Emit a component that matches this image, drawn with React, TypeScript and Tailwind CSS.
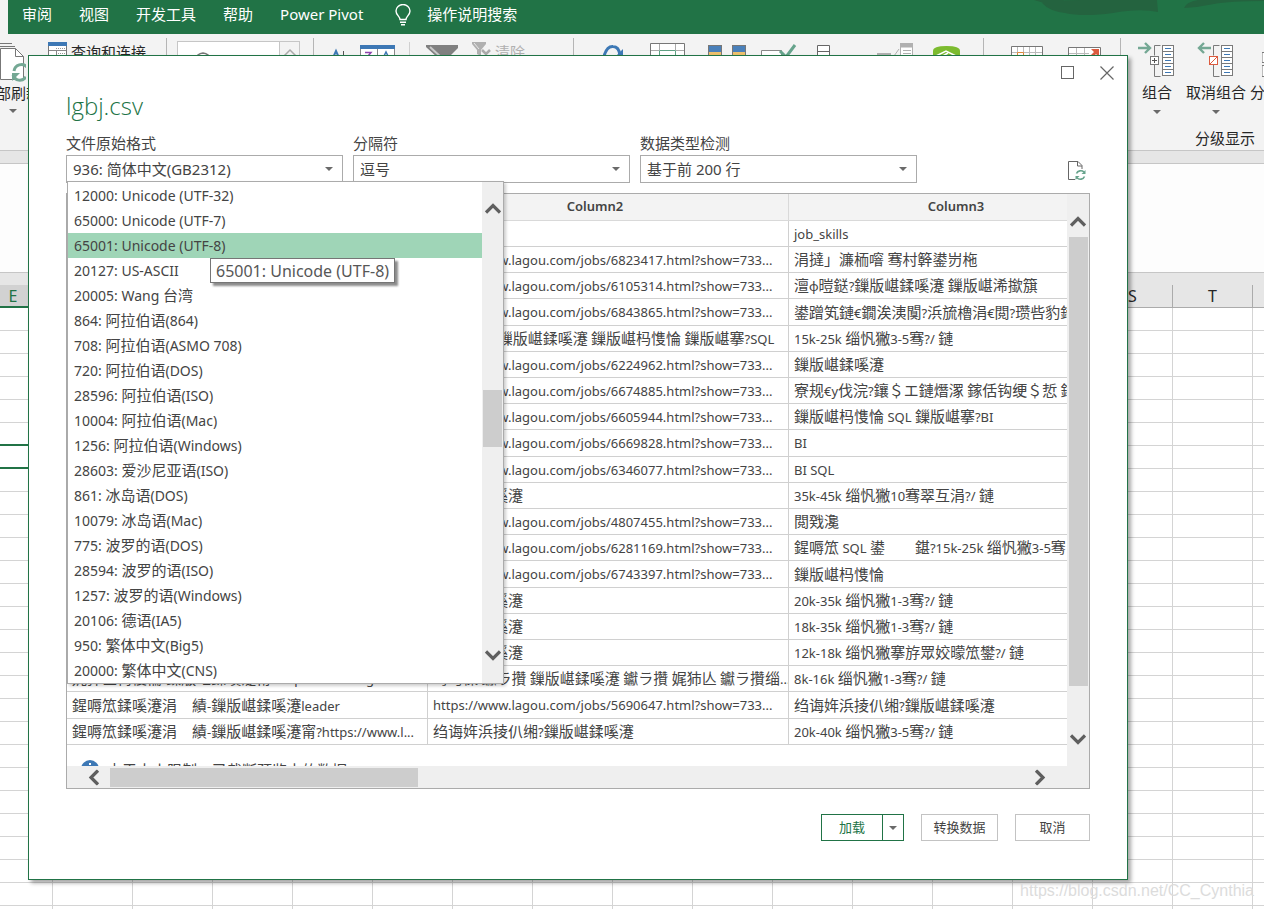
import React, { useState } from 'react'

const ui = "font-['Noto_Sans','Noto_Sans_CJK_SC',sans-serif]"

const tabs = ['审阅', '视图', '开发工具', '帮助', 'Power Pivot']

const encodings = [
  '12000: Unicode (UTF-32)',
  '65000: Unicode (UTF-7)',
  '65001: Unicode (UTF-8)',
  '20127: US-ASCII',
  '20005: Wang 台湾',
  '864: 阿拉伯语(864)',
  '708: 阿拉伯语(ASMO 708)',
  '720: 阿拉伯语(DOS)',
  '28596: 阿拉伯语(ISO)',
  '10004: 阿拉伯语(Mac)',
  '1256: 阿拉伯语(Windows)',
  '28603: 爱沙尼亚语(ISO)',
  '861: 冰岛语(DOS)',
  '10079: 冰岛语(Mac)',
  '775: 波罗的语(DOS)',
  '28594: 波罗的语(ISO)',
  '1257: 波罗的语(Windows)',
  '20106: 德语(IA5)',
  '950: 繁体中文(Big5)',
  '20000: 繁体中文(CNS)',
]

const jobUrl = (id: number) => `https://www.lagou.com/jobs/${id}.html?show=733...`

const rows = [
  ['job_name', '', 'job_skills'],
  ['鏁版嵁鍒嗘瀽甯?', jobUrl(6823417), '涓撻」濂栭噾 骞村簳鍙岃柂'],
  ['鏁版嵁鍒嗘瀽甯?', jobUrl(6105314), '澶ф暟鎹?鏁版嵁鍒嗘瀽 鏁版嵁浠撳簱'],
  ['鏁版嵁鍒嗘瀽甯?', jobUrl(6843865), '鍙蹭笂鏈€鐗涘洟闃?浜旈櫓涓€閲?瓒呰豹鍗'],
  ['鏁版嵁鍒嗘瀽甯?', 'BI 鐢靛晢 鏁版嵁鍒嗘瀽 鏁版嵁杩愯惀 鏁版嵁搴?SQL', '15k-25k 缁忛獙3-5骞?/ 鏈'],
  ['鏁版嵁鍒嗘瀽甯?', jobUrl(6224962), '鏁版嵁鍒嗘瀽'],
  ['鏁版嵁鍒嗘瀽甯?', jobUrl(6674885), '寮规€у伐浣?鑲＄エ鏈熸潈 鎵佸钩绠＄悊 鍏'],
  ['鏁版嵁鍒嗘瀽甯?', jobUrl(6605944), '鏁版嵁杩愯惀 SQL 鏁版嵁搴?BI'],
  ['鏁版嵁鍒嗘瀽甯?', jobUrl(6669828), 'BI'],
  ['鏁版嵁鍒嗘瀽甯?', jobUrl(6346077), 'BI SQL'],
  ['鏁版嵁鍒嗘瀽甯?', '鏁版嵁鍒嗘瀽', '35k-45k 缁忛獙10骞翠互涓?/ 鏈'],
  ['鏁版嵁鍒嗘瀽甯?', jobUrl(4807455), '閲戣瀺'],
  ['鏁版嵁鍒嗘瀽甯?', jobUrl(6281169), '鍟嗕笟 SQL 鍙　　鍖?15k-25k 缁忛獙3-5骞'],
  ['鏁版嵁鍒嗘瀽甯?', jobUrl(6743397), '鏁版嵁杩愯惀'],
  ['鏁版嵁鍒嗘瀽甯?', '鏁版嵁鍒嗘瀽', '20k-35k 缁忛獙1-3骞?/ 鏈'],
  ['鏁版嵁鍒嗘瀽甯?', '鏁版嵁鍒嗘瀽', '18k-35k 缁忛獙1-3骞?/ 鏈'],
  ['鏁版嵁鍒嗘瀽甯?', '鏁版嵁鍒嗘瀽', '12k-18k 缁忛獙搴斿眾姣曚笟鐢?/ 鏈'],
  ['娓犻亾杩愯惀-鏁版嵁鍒嗘瀽甯?https://www.lago...', '骞垮憡 钀ラ攢 鏁版嵁鍒嗘瀽 钀ラ攢 娓犻亾 钀ラ攢缁...', '8k-16k 缁忛獙1-3骞?/ 鏈'],
  ['鍟嗕笟鍒嗘瀽涓　績-鏁版嵁鍒嗘瀽leader', jobUrl(5690647), '绉诲姩浜掕仈缃?鏁版嵁鍒嗘瀽'],
  ['鍟嗕笟鍒嗘瀽涓　績-鏁版嵁鍒嗘瀽甯?https://www.l...', '绉诲姩浜掕仈缃?鏁版嵁鍒嗘瀽', '20k-40k 缁忛獙3-5骞?/ 鏈'],
]

const sheetColumns = 'EFGHIJKLMNOPQRSTU'.split('')

// CJK runs are set one step larger than the latin text around them
function Mixed({ text }: { text: string }) {
  return (
    <>
      {text.split(/([\u3000-\uffef]+)/).map((part, i) =>
        i % 2 ? <span key={i} className="text-[15px]">{part}</span> : part
      )}
    </>
  )
}

function Caret() {
  return (
    <svg width="8" height="4" viewBox="0 0 8 4" className="pointer-events-none">
      <path d="M0 0h8L4 4z" fill="#6a6a6a" />
    </svg>
  )
}

function ScrollArrow({ className }: { className: string }) {
  return (
    <svg width="16" height="11" viewBox="0 0 16 11" className={className}>
      <path d="M1 9.5L8 2.5l7 7" fill="none" stroke="#5f5f5f" strokeWidth="3.2" />
    </svg>
  )
}

function RibbonDivider({ className }: { className: string }) {
  return <div className={`w-px h-24 -mt-1 bg-[#b5b5b5] shrink-0 ${className}`} />
}

function OutlineIcon({ ungroup = false }: { ungroup?: boolean }) {
  return (
    <svg width="38" height="36" viewBox="0 0 38 36" fill="none">
      {ungroup ? (
        <path d="M14 6H2M7 1L2 6l5 5" stroke="#74a894" strokeWidth="2.4" />
      ) : (
        <path d="M0 6h12M7 1l5 5-5 5" stroke="#74a894" strokeWidth="2.4" />
      )}
      <path d="M22.500 3.500h-6v10M16.500 23v11.500h6" stroke="#7a7a7a" />
      {ungroup ? (
        <>
          <rect x="12.500" y="14.500" width="8" height="8" fill="#fff" stroke="#dc5b3f" />
          <path d="M13 22l7-7" stroke="#dc5b3f" />
        </>
      ) : (
        <>
          <rect x="12.500" y="14.500" width="8" height="8" fill="#fff" stroke="#7a7a7a" />
          <path d="M14 18.500h5M16.500 16v5" stroke="#555" />
        </>
      )}
      <rect x="24.500" y="3.500" width="11" height="30" fill="#fff" stroke="#7a7a7a" />
      <path d="M24 9.500h12M24 15.500h12M24 21.500h12M24 27.500h12" stroke="#7a7a7a" />
      <path d="M27 6.500h6M27 12.500h6M27 18.500h6M27 24.500h6M27 30.500h6" stroke="#3d78b5" />
    </svg>
  )
}

function TitleBar() {
  return (
    <header className="relative flex items-start h-[34px] ml-2 pl-[14px] bg-[#217346] text-white text-[15px] leading-7">
      <svg width="230" height="34" viewBox="0 0 230 34" className="absolute right-0 top-0">
        <path d="M0 0h30q-8 4-20 3zM8 3q4-3 40-3h75l1 12q-18-4-45 1-30 4-48 0-16-2-23-10z" fill="#24633f" />
        <path d="M150 8q2-6 14-8h66v1q-34 0-50 3-14 3-30 4z" fill="#24633f" />
      </svg>
      <nav className="flex gap-[27px]">
        {tabs.map((tab) => (
          <button key={tab}>{tab}</button>
        ))}
      </nav>
      <svg width="16" height="22" viewBox="0 0 16 22" fill="none" stroke="#fff" strokeWidth="1.400" className="ml-8 mt-1">
        <path d="M5 15.500c0-3-4-4.500-4-8.500a7 6.500 0 0 1 14 0c0 4-4 5.500-4 8.500z" />
        <path d="M5 18.300h6M6 20.800h4" />
      </svg>
      <button className="ml-4 leading-7">操作说明搜索</button>
    </header>
  )
}

function Ribbon() {
  return (
    <div className="flex items-start h-[117px] pt-2 bg-[#f3f3f3] border-b border-[#c6c6c6] text-[15px] text-[#262626] overflow-hidden">
      <div className="flex flex-col items-center w-[22px] shrink-0">
        <svg width="30" height="42" viewBox="0 0 30 42" fill="none" className="mt-px shrink-0">
          <path d="M0 .5h16M0 3.500h19" stroke="#777" />
          <path d="M4.500 36.500V5.500h15l8 8v23z" fill="#fff" stroke="#777" />
          <path d="M19.500 5.500v8h8" stroke="#777" />
          <path d="M18 28a7.500 7.500 0 0 1 13-4M17 32c2 6 9 7 13 2" stroke="#74a894" strokeWidth="3" />
          <path d="M16 30h8l-8 8z" fill="#74a894" />
        </svg>
        <span className="whitespace-nowrap leading-4">全部刷新</span>
        <span className="mt-2 ml-1"><Caret /></span>
      </div>
      <svg width="19" height="16" viewBox="0 0 19 16" className="ml-[26px] shrink-0">
        <path d="M.5 1v15M18.500 1v15" stroke="#777" />
        <path fill="#fff" d="M1 4h17v12H1z" />
        <path fill="#3d78b5" d="M0 0h19v4H0z" />
        <path d="M8 6.500h9M10 11.500h7" stroke="#999" strokeDasharray="1 1" />
        <path d="M1 8.500h17M8.500 9v7" stroke="#888" />
      </svg>
      <span className="ml-1 leading-5 whitespace-nowrap">查询和连接</span>
      <RibbonDivider className="ml-5" />
      <div className="flex w-[123px] h-16 ml-2.5 -mt-px border border-[#c6c6c6] bg-white shrink-0">
        <svg width="101" height="16" viewBox="0 0 101 16" fill="none">
          <path d="M18 16q1-4 7-5 6 1 7 5" stroke="#777" strokeWidth="1.500" />
        </svg>
        <div className="w-5 border-l border-[#c6c6c6] bg-[#f3f3f3]">
          <svg width="20" height="16" viewBox="0 0 20 16" fill="none">
            <path d="M4 14l6-6 6 6" stroke="#aaa" strokeWidth="1.500" />
          </svg>
        </div>
      </div>
      <RibbonDivider className="ml-[13px]" />
      <svg width="14" height="16" viewBox="0 0 14 16" fill="none" className="ml-[18px] shrink-0">
        <path d="M0 18L4 9l4 9" stroke="#3d78b5" strokeWidth="2" />
        <path d="M11.500 9v7" stroke="#555" />
      </svg>
      <svg width="35" height="16" viewBox="0 0 35 16" fill="none" className="ml-[14px] shrink-0">
        <path d="M1 7h33v9H1z" fill="#fff" />
        <path d="M.5 3v13M34.500 3v13M17.500 6v10" stroke="#888" />
        <path fill="#3d78b5" d="M0 3h35v4H0z" />
        <path d="M5 10.500h6l-5 6" stroke="#8e44ad" strokeWidth="1.500" />
        <path d="M23 16l3-6 3 6" stroke="#3d78b5" strokeWidth="1.500" />
      </svg>
      <div className="w-px h-16 ml-[14px] bg-[#d0d0d0] shrink-0" />
      <svg width="32" height="16" viewBox="0 0 32 16" className="ml-4 shrink-0">
        <path d="M0 3h32v3L22 16H12L0 5z" fill="#808080" />
        <path d="M4 5l12 11" stroke="#c9c9c9" strokeWidth="2" />
      </svg>
      <svg width="19" height="16" viewBox="0 0 19 16" fill="none" className="ml-[14px] shrink-0">
        <path d="M0 0h14v2L9 8v6l-4-2V8L0 2z" fill="#b0b0b0" />
        <path d="M2 1l5 6" stroke="#e8e8e8" />
        <path d="M10 8l4 4 4-4" stroke="#aaa" strokeWidth="2.500" />
      </svg>
      <span className="ml-1 leading-5 text-[#b0b0b0] whitespace-nowrap">清除</span>
      <RibbonDivider className="ml-12" />
      <svg width="20" height="16" viewBox="0 0 20 16" fill="none" className="ml-[29px] shrink-0">
        <path d="M1 14Q4 4 10 4.500q6 0 7 9" stroke="#3d78b5" strokeWidth="3" />
        <path d="M20 7v8h-8z" fill="#3d78b5" />
      </svg>
      <svg width="35" height="16" viewBox="0 0 35 16" fill="none" className="ml-[27px] shrink-0">
        <path d="M.5 20V1.500h34V20" fill="#fff" stroke="#777" />
        <path d="M9.500 2v6M25.500 2v6M1 8.500h8M26 8.500h8" stroke="#aaa" />
        <path d="M9.500 16V8.500h16V16" stroke="#5fa083" />
      </svg>
      <svg width="38" height="16" viewBox="0 0 38 16" className="ml-[23px] shrink-0">
        <path d="M0 3h14v13H0zM24 3h14v13H24z" fill="#777" />
        <path d="M1 4h12v6H1zM25 4h12v6H25z" fill="#4a80ba" />
        <path d="M1 10h12v6H1zM25 10h12v6H25z" fill="#edc06c" />
      </svg>
      <svg width="36" height="16" viewBox="0 0 36 16" fill="none" className="ml-[15px] shrink-0">
        <path d="M.5 16V8.500h20V16" fill="#fff" stroke="#888" />
        <path d="M19 9l6 6 9-12" stroke="#66a38c" strokeWidth="3" />
      </svg>
      <svg width="13" height="16" viewBox="0 0 13 16" className="ml-5 shrink-0">
        <path d="M.5 16V3.500h12V16M0 9.500h13" fill="#fff" stroke="#666" />
      </svg>
      <svg width="36" height="16" viewBox="0 0 36 16" fill="none" className="ml-[47px] shrink-0">
        <path d="M0 11h14v5H0zM23 1h13v4H23z" fill="#b0b0b0" />
        <path d="M23.500 5h12v11h-12z" fill="#fff" stroke="#b0b0b0" />
        <path d="M26 8.500h8M26 11.500h8M17 14l5-7" stroke="#b0b0b0" />
      </svg>
      <svg width="27" height="16" viewBox="0 0 27 16" fill="none" className="ml-5 shrink-0">
        <path d="M0 16V9q0-5 13.500-5T27 9v7z" fill="#7cbb2f" />
        <path d="M3 14l10-5 10 5M8 15l7-4" stroke="#fff" strokeWidth="1.500" />
      </svg>
      <RibbonDivider className="ml-[23px]" />
      <svg width="32" height="16" viewBox="0 0 32 16" fill="none" className="ml-[27px] shrink-0">
        <path d="M.5 16V4.500h31V16" fill="#fff" stroke="#777" />
        <path d="M6.500 5v11M12.500 5v11M18.500 5v11M24.500 5v11M1 10.500h30" stroke="#bbb" />
        <path d="M6.500 16v-5.500h6V16" stroke="#e08b3c" />
      </svg>
      <svg width="34" height="16" viewBox="0 0 34 16" fill="none" className="ml-[25px] shrink-0">
        <path d="M.5 16V5.500h32V16" fill="#fff" stroke="#777" />
        <path d="M8.500 6v10M16.500 6v10M1 11.500h20" stroke="#bbb" />
        <path d="M23 7h8v8l-3-3-4 4-2-2 4-4z" fill="#dc5b3f" />
      </svg>
      <div className="flex w-[144px] ml-auto shrink-0">
        <RibbonDivider className="" />
        <div className="pl-[7px]">
          <div className="flex">
            <button className="flex flex-col items-center w-[58px] whitespace-nowrap">
              <OutlineIcon />
              <span className="mt-1 leading-5">组合</span>
              <span className="mt-2 h-2"><Caret /></span>
            </button>
            <button className="flex flex-col items-center w-[60px] whitespace-nowrap">
              <OutlineIcon ungroup />
              <span className="mt-1 leading-5">取消组合</span>
              <span className="mt-2 h-2"><Caret /></span>
            </button>
            <button className="flex flex-col items-center w-[60px] ml-1 whitespace-nowrap">
              <svg width="36" height="36" viewBox="0 0 36 36" fill="none">
                <path d="M0 10.500h20v10H0zM0 23.500h20v11H0z" fill="#fff" stroke="#7a7a7a" />
              </svg>
              <span className="mt-1 leading-5">分类汇总</span>
            </button>
          </div>
          <p className="mt-2 pl-[67px] leading-6 whitespace-nowrap">分级显示</p>
        </div>
      </div>
    </div>
  )
}

function Sheet() {
  return (
    <div className="flex-1 overflow-hidden bg-[#e6e6e6] border-t border-[#c6c6c6]">
      <table className="table-fixed w-[1360px] -ml-[27px] mt-3 border-separate border-spacing-0">
        <thead>
          <tr>
            {sheetColumns.map((col) => (
              <th
                key={col}
                className={
                  col === 'E'
                    ? 'h-[23px] p-0 font-normal text-base leading-5 text-[#217346] bg-[#d2d2d2] border-b-2 border-[#217346]'
                    : 'h-[23px] p-0 font-normal text-base leading-5 text-[#262626] border-b border-r border-[#ababab]'
                }
              >
                {col}
              </th>
            ))}
          </tr>
        </thead>
        <tbody className="bg-white">
          {Array.from({ length: 27 }, (_, row) => (
            <tr key={row}>
              {sheetColumns.map((col) => (
                <td
                  key={col}
                  className={
                    col === 'E' && (row === 5 || row === 6)
                      ? 'h-[23px] p-0 border-r border-b-2 border-r-[#d4d4d4] border-b-[#217346]'
                      : 'h-[23px] p-0 border-r border-b border-[#d4d4d4]'
                  }
                />
              ))}
            </tr>
          ))}
        </tbody>
      </table>
    </div>
  )
}

type FieldProps = {
  id: string
  label: string
  value: string
  children?: React.ReactNode
}

function SelectField({ id, label, value, children }: FieldProps) {
  return (
    <div className="w-[277px]">
      <label htmlFor={id} className="block text-[15px] leading-6 text-[#444]">{label}</label>
      <div className="relative">
        <select
          id={id}
          className="block w-full h-7 pl-1.5 appearance-none rounded-none border border-[#ababab] bg-white text-[15px] text-[#444]"
        >
          <option>{value}</option>
        </select>
        <span className="absolute right-2.5 top-3 pointer-events-none"><Caret /></span>
        {children}
      </div>
    </div>
  )
}

function EncodingMenu() {
  const [selected, setSelected] = useState('65001: Unicode (UTF-8)')

  return (
    <div className="absolute left-px top-[26px] z-20 flex w-[437px] border border-[#ababab] bg-white shadow-[2px_2px_3px_rgba(0,0,0,0.2)]">
      <ul role="listbox" aria-label="文件原始格式" className="flex-1 pt-px text-sm text-[#444]">
        {encodings.map((item) => (
          <li
            key={item}
            role="option"
            aria-selected={item === selected}
            onClick={() => setSelected(item)}
            className={
              item === selected
                ? 'relative h-[25px] pl-1.5 leading-[25px] bg-[#9fd5b7]'
                : 'h-[25px] pl-1.5 leading-[25px]'
            }
          >
            <Mixed text={item} />
            {item === selected && (
              <span
                role="tooltip"
                className="absolute left-[142px] top-[25px] z-10 h-[25px] px-[5px] border border-[#767676] bg-white text-base leading-6 text-[#575757] whitespace-nowrap shadow-[3px_3px_2px_rgba(0,0,0,0.45)]"
              >
                {item}
              </span>
            )}
          </li>
        ))}
      </ul>
      <div className="flex flex-col items-center w-[21px] pt-[21px] pb-[22px] bg-[#efefef]">
        <ScrollArrow className="" />
        <div className="w-[19px] h-[57px] mt-[176px] bg-[#cdcdcd]" />
        <ScrollArrow className="mt-auto rotate-180" />
      </div>
    </div>
  )
}

function Preview() {
  return (
    <div className="mt-2.5 border border-[#ababab] bg-[#efefef]">
      <div className="flex h-[572px]">
        <div className="flex-1 min-w-0 overflow-hidden bg-white">
          <table className="table-fixed w-[1083px] border-separate border-spacing-0 text-[13px] text-[#444]">
            <thead>
              <tr className="bg-[#f3f3f3]">
                {['Column1', 'Column2', 'Column3'].map((col) => (
                  <th key={col} className="h-[27px] p-0 pr-[26px] border-r border-b border-[#d9d9d9] font-semibold">
                    {col}
                  </th>
                ))}
              </tr>
            </thead>
            <tbody>
              {rows.map((row, i) => (
                <tr key={i} className={i % 5 === 3 ? 'h-[27px]' : 'h-[26px]'}>
                  {row.map((cell, j) => (
                    <td key={j} className="p-0 pl-[5px] border-r border-b border-[#d0d0d0] leading-5 whitespace-nowrap overflow-hidden">
                      <Mixed text={cell} />
                    </td>
                  ))}
                </tr>
              ))}
            </tbody>
          </table>
          <p className="flex items-start pl-[14px] pt-[15px] text-[15px] leading-5 text-[#444]">
            <svg width="18" height="18" viewBox="0 0 18 18" className="mr-2">
              <circle cx="9" cy="9" r="9" fill="#3d78b5" />
              <path d="M8 3h2v2H8zM8 7h2v7H8z" fill="#fff" />
            </svg>
            由于大小限制，已截断预览中的数据。
          </p>
        </div>
        <div className="flex flex-col items-center w-[22px] pt-[22px] pb-[21px]">
          <ScrollArrow className="" />
          <div className="w-[19px] h-[449px] mt-2.5 bg-[#cdcdcd]" />
          <ScrollArrow className="mt-auto rotate-180" />
        </div>
      </div>
      <div className="flex items-center h-[22px] pl-[19px] pr-[41px]">
        <ScrollArrow className="-rotate-90" />
        <div className="w-[308px] h-[19px] ml-2 bg-[#cdcdcd]" />
        <ScrollArrow className="ml-auto rotate-90" />
      </div>
    </div>
  )
}

function ImportDialog() {
  return (
    <section
      role="dialog"
      aria-label="lgbj.csv"
      className="absolute left-7 right-[136px] top-[55px] px-[37px] pb-[38px] border border-[#217346] bg-white shadow-[3px_3px_4px_rgba(0,0,0,0.35)]"
    >
      <div className="flex justify-end items-center gap-[26px] h-[33px] -mr-6">
        <button aria-label="最大化" className="w-[13px] h-[13px] border border-[#666]" />
        <button aria-label="关闭">
          <svg width="14" height="14" viewBox="0 0 14 14">
            <path d="M.5.5l13 13M13.500.5l-13 13" stroke="#666" strokeWidth="1.200" />
          </svg>
        </button>
      </div>
      <h1 className="h-[42px] pt-px font-['Open_Sans',sans-serif] text-2xl leading-8 font-light text-[#217346]">lgbj.csv</h1>
      <div className="flex items-end gap-2.5">
        <SelectField id="origin" label="文件原始格式" value="936: 简体中文(GB2312)">
          <EncodingMenu />
        </SelectField>
        <SelectField id="delimiter" label="分隔符" value="逗号" />
        <SelectField id="detect" label="数据类型检测" value="基于前 200 行" />
        <button aria-label="刷新" className="ml-auto mr-1 mb-0.5">
          <svg width="18" height="20" viewBox="0 0 18 20" fill="none">
            <path d="M7 18.500H.5V.5H10l4 4V8" stroke="#666" />
            <path d="M9.500.5v4.500H14" stroke="#666" />
            <path d="M8.500 12.500a4.500 4 0 0 1 7.500-1.500M16.500 15.500a4.500 4 0 0 1-7.500 1.500" stroke="#66a38c" strokeWidth="1.600" />
            <path d="M17.500 9v4h-4zM7.500 19v-4h4z" fill="#66a38c" />
          </svg>
        </button>
      </div>
      <Preview />
      <div className="flex justify-end gap-[17px] mt-[25px] text-[13px] text-[#444]">
        <div className="flex h-[27px] border border-[#217346] text-[#217346]">
          <button className="w-[61px] border-r border-[#217346]">加载</button>
          <button aria-label="更多加载选项" className="flex items-center justify-center w-5"><Caret /></button>
        </div>
        <button className="w-[77px] h-[27px] border border-[#c3c3c3]">转换数据</button>
        <button className="w-[75px] h-[27px] border border-[#c3c3c3]">取消</button>
      </div>
    </section>
  )
}

export default function App() {
  return (
    <div className={`relative flex flex-col h-screen min-h-[909px] overflow-hidden bg-[#f3f3f3] ${ui}`}>
      <TitleBar />
      <Ribbon />
      <div className="h-3 bg-[#e6e6e6]" />
      <div className="h-[109px] border-t border-[#c6c6c6] bg-[#fdfdfd]" />
      <Sheet />
      <ImportDialog />
      <span className="absolute right-2.5 bottom-1.5 font-['Liberation_Sans',sans-serif] text-base text-[#dcdcdc]">
        https://blog.csdn.net/CC_Cynthia
      </span>
    </div>
  )
}
